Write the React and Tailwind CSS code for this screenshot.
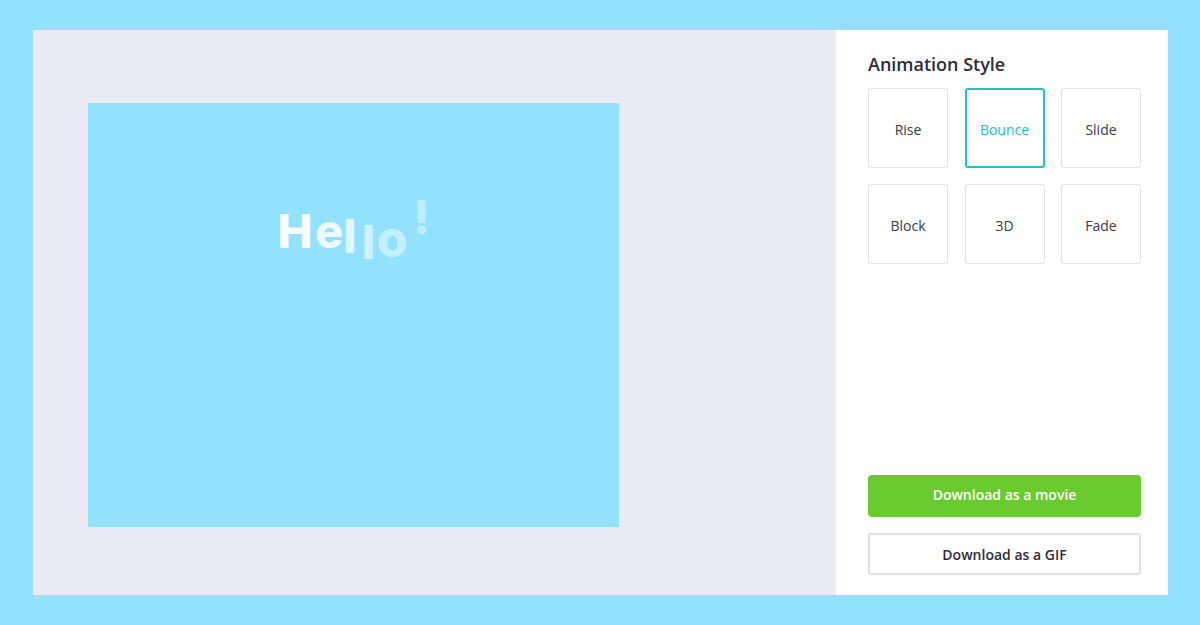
import { useState } from "react";

const styles = ["Rise", "Bounce", "Slide", "Block", "3D", "Fade"];

// each letter sits in its own box so the bounce offsets stay put
const HelloText = () => {
  return (
    <div
      className="flex items-end text-[47px] font-extrabold leading-none text-white"
      style={{ fontFamily: "Inter, 'Noto Sans', sans-serif" }}
    >
      <span className="flex justify-center w-[34px] opacity-95">H</span>
      <span className="flex justify-center w-[34px] opacity-85">e</span>
      <span className="flex justify-center w-[8px] translate-y-[5px] opacity-70">l</span>
      <span className="flex justify-center w-[29px] translate-y-[11px] opacity-55">l</span>
      <span className="flex justify-center w-[19px] translate-y-[8px] scale-[1.08] opacity-45">o</span>
      <span className="flex justify-center w-[39px] -translate-y-[14px] opacity-40">!</span>
    </div>
  );
};

export default function App() {
  const [active, setActive] = useState("Bounce");

  return (
    <div
      className="min-h-screen bg-[#92e2ff] pl-[33px] pr-[32px] pt-[30px] pb-[30px]"
      style={{ fontFamily: "'Open Sans', 'Noto Sans', sans-serif" }}
    >
      <div className="flex h-[565px]">
        {/* Preview */}
        <div className="flex-1 bg-[#e8ebf4] pl-[55px] pt-[73px]">
          <div className="w-[531px] h-[424px] bg-[#92e2ff] flex items-start justify-start pt-[104px] pl-[190px]">
            <HelloText />
          </div>
        </div>

        {/* Sidebar */}
        <div className="w-[332px] bg-white pl-[32px] pr-[27px] pt-[22px] pb-[20px] flex flex-col">
          <h2 className="text-[18px] font-semibold text-[#2d2d38] leading-[24px] mb-[12px]">
            Animation Style
          </h2>
          <div className="grid grid-cols-[80px_80px_80px] gap-x-[16.5px] gap-y-[16px]">
            {styles.map((s) => (
              <button
                key={s}
                onClick={() => setActive(s)}
                className={
                  s === active
                    ? "h-[80px] pt-[2px] rounded-[3px] border-2 border-[#22c0c8] text-[#22c0c8] text-[14px]"
                    : "h-[80px] pt-[2px] rounded-[3px] border border-[#e2e2e6] text-[#3a3a44] text-[14px]"
                }
              >
                {s}
              </button>
            ))}
          </div>

          <div className="mt-auto flex flex-col gap-[16px]">
            <button className="h-[42px] pb-[3px] rounded-[4px] bg-[#6aca2f] text-white text-[14px] font-semibold">
              Download as a movie
            </button>
            <button className="h-[42px] rounded-[3px] border-2 border-[#e0e0e3] bg-white text-[#2d2d38] text-[14px] font-semibold">
              Download as a GIF
            </button>
          </div>
        </div>
      </div>
    </div>
  );
}
